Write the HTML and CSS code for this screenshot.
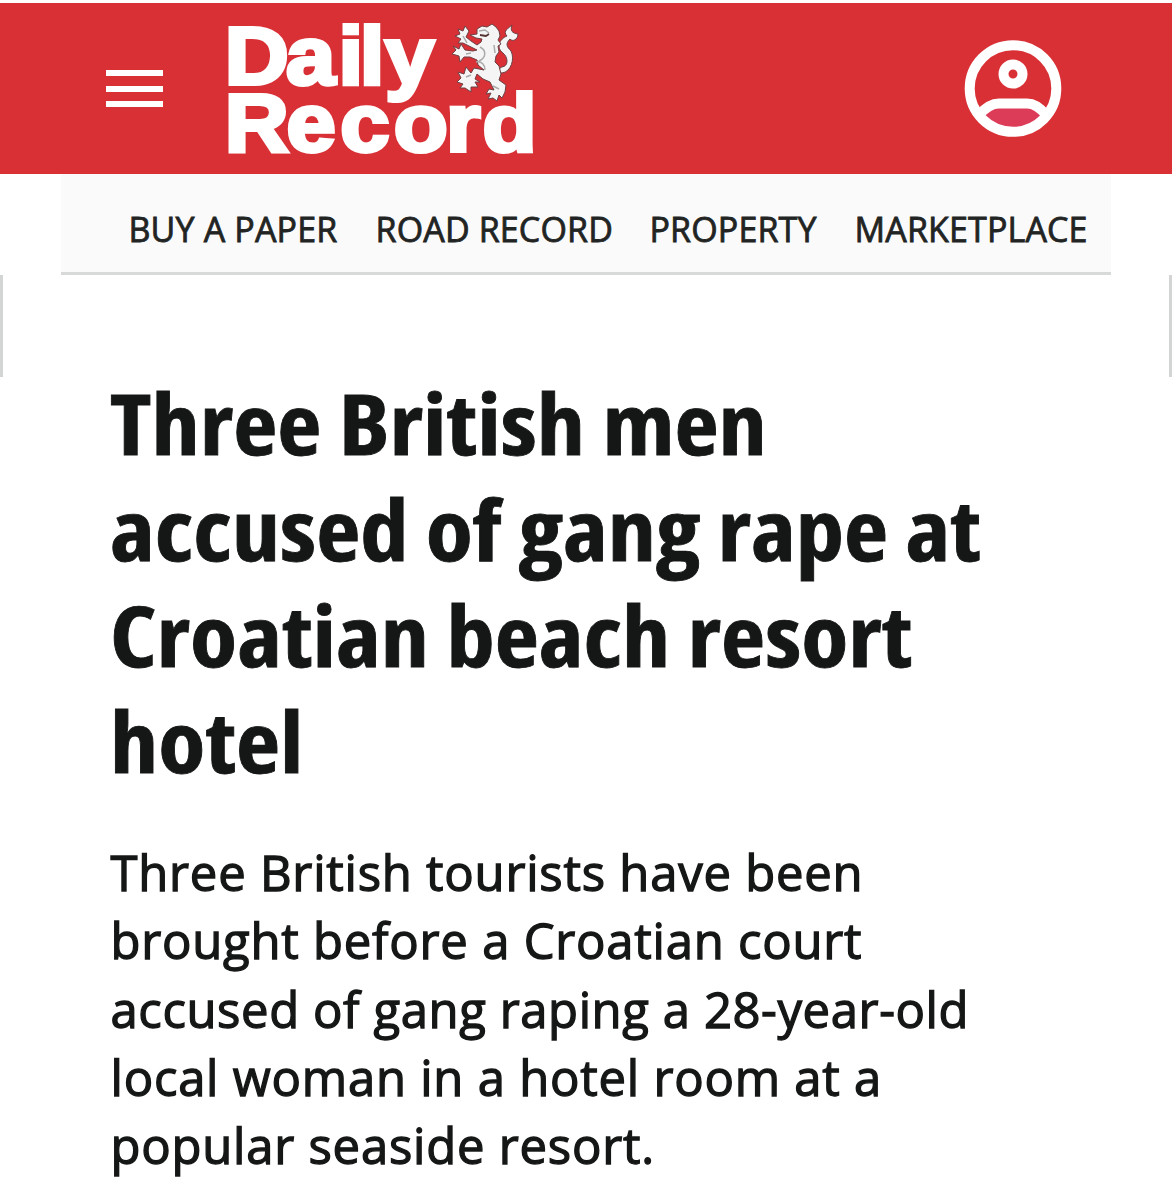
FILE: index.html
```html
<!DOCTYPE html>
<html lang="en">
<head>
<meta charset="utf-8">
<title>Daily Record</title>
<link rel="stylesheet" href="styles.css">
</head>
<body>
<header class="masthead">
  <button class="menu" aria-label="Menu"><span></span><span></span><span></span></button>
  <svg class="logo" width="320" height="150" viewBox="220 10 320 150" role="img">
    <g class="logo-text" transform="scale(1.08 1)">
      <text x="208 264.800 313.500 333.200 356.500" y="84.500">Daily</text>
      <text x="208 265.200 315 364.500 413 446.800" y="151">Record</text>
    </g>
    <g class="lion">
      <path d="M502 67C509 66 508 57 503 53C496 48 499 39 507 36C502 31 509 28 512 25C510 31 512 33 518 34C518 40 512 42 510 39C505 44 507 47 511 51C515 59 511 72 502 73C498 73 499 67 502 67Z"/>
      <path d="M477 29L482 26L487 27L492 24L496 27L499 31L500 36L498 40L501 44L498 46L499 52L496 56L495 62L499 66L501 74L499 80L506 85L505 92L502 98L499 95L497 101L493 98L488 99L491 93L486 94L489 89L494 90L490 82L483 79L477 74L475 79L480 82L475 82L478 87L471 87L471 92L465 88L460 88L463 84L457 82L461 78L458 72L464 74L466 67L471 73L474 68L484 70L478 65L477 60L470 57L464 57L460 62L459 56L452 54L456 50L453 46L459 49L461 44L465 50L473 51L477 50L469 46L463 43L458 43L461 39L455 36L460 34L458 29L463 31L465 26L469 31L466 37L471 41L477 45L481 42L482 39L476 38L470 35L477 34Z"/>
      <path class="shade" d="M479 31L485 30L489 33M480 47C486 50 487 57 479 61M476 62C482 61 485 65 485 70M466 77L471 75M466 54L471 53M494 45L495 53M493 86L499 89M463 36L467 43"/>
      <path class="mouth" d="M480 35L486 36L489 34"/>
    </g>
  </svg>
  <svg class="account" width="98" height="98" viewBox="0 0 98 98" aria-label="Account">
    <path fill="#dd3c58" d="M19 76Q27 67 36 66H62Q71 67 79 76Q65 90 49 90Q32 90 19 76Z"/>
    <g fill="none" stroke="#fff" stroke-width="10">
      <circle cx="49" cy="48.500" r="43.300"/>
      <circle cx="49" cy="34" r="9.500"/>
      <path d="M15 75Q25 63.500 35 63.500H63Q73 63.500 82 75"/>
    </g>
  </svg>
</header>
<nav class="sections">
  <a class="buy">BUY A PAPER</a><a class="road">ROAD RECORD</a><a class="prop">PROPERTY</a><a class="market">MARKETPLACE</a>
</nav>
<main class="article">
  <h1><span>Three British men</span><span>accused of gang rape at</span><span>Croatian beach resort</span><span>hotel</span></h1>
  <p>Three British tourists have been<br>brought before a Croatian court<br><span class="tight">accused of gang raping a 28-year-old</span><br>local woman in a hotel room at a<br>popular seaside resort.</p>
</main>
</body>
</html>
```
FILE: styles.css
```css
* { box-sizing: border-box; }
body { margin: 0; padding-top: 3px; background: #fff; color: #151716; font-family: "Open Sans", "Noto Sans", sans-serif; height: 1200px; overflow: hidden; }
.masthead { height: 171px; padding: 0 110px 0 106px; background: #d93036; display: flex; align-items: flex-start; }
.menu { width: 57px; padding: 0; margin-top: 67px; border: 0; background: none; display: grid; gap: 9.5px; }
.menu span { height: 6px; background: #fff; }
.logo { margin: 7px 0 0 57px; overflow: visible; }
.logo-text { font: 700 82px "Liberation Sans", Arial, sans-serif; fill: #fff; stroke: #fff; stroke-width: 3.9px; }
.lion { fill: #f6f5f5; stroke: #6d4044; stroke-width: 1; stroke-linejoin: round; }
.lion .shade { fill: none; stroke: #aaa; stroke-width: 1.5; }
.lion .mouth { fill: none; stroke: #533; stroke-width: 1.8; }
.account { margin: 37px 0 0 auto; }
.sections { margin: 0 61px; height: 101px; padding-left: 67.5px; background: #fafafa; border-bottom: 3px solid #d8d9d9; display: flex; font-size: 34px; line-height: 110px; letter-spacing: .15px; white-space: nowrap; color: #222423; -webkit-text-stroke: .8px #222423; }
.buy { width: 247px; }
.road { width: 274px; }
.prop { width: 205px; }
.article { padding: 94px 100px 0 108px; border: solid #d3d4d4; border-width: 0 3px; border-image: linear-gradient(#d3d4d4 103px, transparent 103px) 1; }
h1 { margin: 0 0 0 -1.5px; font: 700 85px/106px "Open Sans", "Noto Sans", sans-serif; font-stretch: 80%; white-space: nowrap; transform: scaleX(1.135); transform-origin: 0 0; -webkit-text-stroke: .8px #151716; }
h1 span { display: block; }
p { margin: 45px 0 0 -.5px; font-size: 49px; line-height: 68.300px; letter-spacing: .77px; white-space: nowrap; -webkit-text-stroke: 1.3px #151716; }
.tight { letter-spacing: .59px; }
```
